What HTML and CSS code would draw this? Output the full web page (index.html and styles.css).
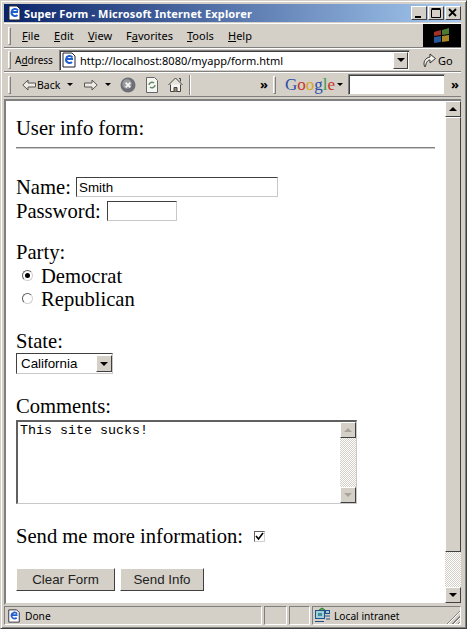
FILE: index.html
```html
<!DOCTYPE html>
<html lang="en">
<head>
  <meta charset="UTF-8">
  <meta name="viewport" content="width=device-width, initial-scale=1.0">
  <title>Super Form - Microsoft Internet Explorer</title>
  <link rel="stylesheet" href="styles.css">
</head>
<body>
  <div class="window">
    <div class="titlebar">
      <svg class="title-icon" width="16" height="16" viewBox="0 0 16 16">
        <path d="M3 1h8l3 3v11H3z" fill="#fff" stroke="#223"/>
        <path d="M12 7H5.500M5.500 7a3.600 3.600 0 0 1 6.500-1.500M5.500 7a3.600 3.600 0 0 0 6 3" fill="none" stroke="#1f5fd0" stroke-width="2"/>
      </svg>
      <span class="title-text">Super Form - Microsoft Internet Explorer</span>
      <div class="win-buttons">
        <button class="win-btn" type="button"><svg width="12" height="12"><rect x="2" y="9" width="6" height="2" fill="#000"/></svg></button>
        <button class="win-btn" type="button"><svg width="12" height="12"><path d="M1.500 2.500h9v8h-9zM1.500 1.500h9" fill="none" stroke="#000"/></svg></button>
        <button class="win-btn" type="button"><svg width="12" height="12"><path d="M2 2l7 7M9 2l-7 7" stroke="#000" stroke-width="1.800"/></svg></button>
      </div>
    </div>

    <div class="bar menu-bar">
      <span class="grip"></span>
      <nav class="menu">
        <span><u>F</u>ile</span>
        <span><u>E</u>dit</span>
        <span><u>V</u>iew</span>
        <span>F<u>a</u>vorites</span>
        <span><u>T</u>ools</span>
        <span><u>H</u>elp</span>
      </nav>
      <div class="throbber">
        <svg class="flag" width="18" height="16" viewBox="0 0 18 16">
          <path d="M1 4l7-2v5l-7 1z" fill="#c8402c"/>
          <path d="M9 2l7-2v6l-7 1z" fill="#5c9a3c"/>
          <path d="M1 9l7-1v6l-7 1z" fill="#2f6fc0"/>
          <path d="M9 8l7-1v6l-7 1z" fill="#d8a82c"/>
        </svg>
      </div>
    </div>

    <div class="bar address-bar">
      <span class="grip"></span>
      <span class="address-label">A<u>d</u>dress</span>
      <div class="address-field">
        <svg width="16" height="16" viewBox="0 0 16 16">
          <path d="M2 1h9l3 3v11H2z" fill="#fff" stroke="#223"/>
          <path d="M12 7H5M5 7a3.600 3.600 0 0 1 6.500-1.500M5 7a3.600 3.600 0 0 0 6 3" fill="none" stroke="#1f5fd0" stroke-width="2"/>
        </svg>
        <span class="url">http://localhost:8080/myapp/form.html</span>
        <span class="drop-btn"><i class="arrow-down"></i></span>
      </div>
      <div class="go">
        <svg width="15" height="16" viewBox="0 0 15 16">
          <path d="M2.500 14.500C1 10 3 6 8 5V2l5.500 4.500L8 11V8c-2.500 0-4 2.500-4.500 6.500z" fill="#f4f2ec" stroke="#333"/>
        </svg>
        <span>Go</span>
      </div>
    </div>

    <div class="bar tool-bar">
      <span class="grip"></span>
      <svg class="nav-arrow" width="14" height="12" viewBox="0 0 14 12">
        <path d="M.8 6L6 1v3h7.500v4H6v3z" fill="#eeeae2" stroke="#555"/>
      </svg>
      <span class="back-label">Back</span>
      <i class="arrow-small arrow-back"></i>
      <svg class="nav-arrow nav-forward" width="14" height="12" viewBox="0 0 14 12">
        <path d="M13.200 6L8 1v3H.5v4H8v3z" fill="#eeeae2" stroke="#555"/>
      </svg>
      <i class="arrow-small arrow-forward"></i>
      <svg class="stop" width="16" height="16" viewBox="0 0 17 17">
        <circle cx="8.500" cy="8.500" r="8" fill="#6d6f75"/>
        <circle cx="7.500" cy="7.500" r="5" fill="#9a9ca2"/>
        <path d="M6 6l5 5M11 6l-5 5" stroke="#f2f2f2" stroke-width="2"/>
      </svg>
      <svg class="refresh" width="14" height="16" viewBox="0 0 14 16">
        <path d="M1.500.5h8l3 3v12h-11z" fill="#f6f6f2" stroke="#666"/>
        <path d="M4 8a3 3 0 0 1 5-2M10 8a3 3 0 0 1-5 2" fill="none" stroke="#6a8a6a" stroke-width="1.500"/>
      </svg>
      <svg class="home" width="15" height="15" viewBox="0 0 15 15">
        <path d="M.5 8l7-7 7 7" fill="#e8e4da" stroke="#444"/>
        <path d="M2.500 7.500v7h10v-7" fill="#f6f4ee" stroke="#444"/>
        <path d="M6 14.500v-4h3v4" fill="#9a8a70" stroke="#444"/>
        <path d="M11 1.500h1.500v3" fill="none" stroke="#444"/>
      </svg>
      <span class="sep"></span>
      <span class="chevrons chevrons-mid">»</span>
      <span class="grip grip-google"></span>
      <span class="google"><b class="g-blue">G</b><b class="g-red">o</b><b class="g-yellow">o</b><b class="g-blue">g</b><b class="g-green">l</b><b class="g-red">e</b></span>
      <i class="arrow-small arrow-google"></i>
      <input class="search" type="text">
      <span class="chevrons chevrons-end">»</span>
    </div>

    <div class="viewport">
      <form class="page">
        <div class="form-title">User info form:</div>
        <hr class="rule">

        <div class="line line-name">Name: <input class="field field-name" type="text" value="Smith"></div>
        <div class="line">Password: <input class="field field-pass" type="password"></div>

        <div class="line gap-party">Party:</div>
        <div class="option"><span class="radio radio-on"></span>Democrat</div>
        <div class="option"><span class="radio"></span>Republican</div>

        <div class="line gap-state">State:</div>
        <div class="select">
          <span class="select-value">California</span>
          <span class="drop-btn"><i class="arrow-down"></i></span>
        </div>

        <div class="line gap-block">Comments:</div>
        <div class="textarea-box">
          <textarea class="comments" spellcheck="false">This site sucks!</textarea>
          <div class="scrollbar scrollbar-small">
            <span class="sb-btn"><i class="arrow-up arrow-grey"></i></span>
            <span class="sb-track"></span>
            <span class="sb-btn"><i class="arrow-down arrow-grey"></i></span>
          </div>
        </div>

        <div class="line gap-block">Send me more information: <span class="check"><svg width="9" height="9"><path d="M1 4l2.500 3L8 1" fill="none" stroke="#000" stroke-width="1.600"/></svg></span></div>

        <div class="actions">
          <button class="btn btn-clear" type="reset">Clear Form</button>
          <button class="btn btn-send" type="button">Send Info</button>
        </div>
      </form>
      <div class="scrollbar">
        <span class="sb-btn"><i class="arrow-up"></i></span>
        <span class="sb-thumb"></span>
        <span class="sb-track"></span>
        <span class="sb-btn"><i class="arrow-down"></i></span>
      </div>
    </div>

    <div class="statusbar">
      <div class="panel panel-main">
        <svg width="14" height="14" viewBox="0 0 16 16">
          <path d="M2 1h9l3 3v11H2z" fill="#fff" stroke="#223"/>
          <path d="M12 7H5M5 7a3.600 3.600 0 0 1 6.500-1.500M5 7a3.600 3.600 0 0 0 6 3" fill="none" stroke="#1f5fd0" stroke-width="2"/>
        </svg>
        <span>Done</span>
      </div>
      <div class="panel panel-a"></div>
      <div class="panel panel-b"></div>
      <div class="panel panel-zone">
        <svg width="17" height="17" viewBox="0 0 17 17">
          <path d="M5 3l3-2 3 2" fill="#5cb04c" stroke="#2f7a2f"/>
          <rect x="1.500" y="3.500" width="9" height="8" fill="#9fd0d8" stroke="#27508a"/>
          <rect x="11.500" y="3.500" width="4" height="3" fill="#9fd0d8" stroke="#27508a"/>
          <path d="M1 14.500h9M11 9h5M12 12h4" stroke="#27508a"/>
          <rect x="4" y="6" width="4" height="3" fill="#3f8f9f"/>
        </svg>
        <span>Local intranet</span>
        <span class="resize"></span>
      </div>
    </div>
  </div>
</body>
</html>
```

FILE: styles.css
```css
* {
  box-sizing: border-box;
}

html, body {
  margin: 0;
  padding: 0;
}

body {
  width: 467px;
  height: 629px;
  overflow: hidden;
  font-family: "Noto Sans", "Liberation Sans", sans-serif;
  font-size: 11px;
  color: #000;
}

.window {
  height: 629px;
  display: flex;
  flex-direction: column;
  padding: 4px 5px 3px 3px;
  background-color: #d4d0c8;
  border: 1px solid #404040;
  border-top-color: #d4d0c8;
  border-left-color: #d4d0c8;
  box-shadow: inset 1px 1px 0 #fff, inset -1px -1px 0 #808080;
}

/* title bar */
.titlebar {
  height: 18px;
  flex: none;
  display: flex;
  align-items: center;
  margin-top: -1px;
  padding-left: 2px;
  background: linear-gradient(to right, #0a246a, #a6caf0);
}

.title-icon {
  flex: none;
}

.title-text {
  margin-left: 2px;
  color: #fff;
  font-weight: bold;
  font-size: 11px;
  letter-spacing: 0.14px;
  white-space: nowrap;
}

.win-buttons {
  margin-left: auto;
  display: flex;
  gap: 1px;
}

.win-btn {
  width: 16px;
  height: 14px;
  padding: 0;
  display: flex;
  align-items: center;
  justify-content: center;
  background-color: #d4d0c8;
  border: 1px solid #404040;
  border-top-color: #fff;
  border-left-color: #fff;
}

/* toolbars */
.bar {
  flex: none;
  display: flex;
  align-items: center;
  padding-left: 4px;
  border-top: 1px solid #fff;
  border-bottom: 1px solid #808080;
}

.menu-bar {
  height: 25px;
  margin-top: 1px;
}

.address-bar {
  height: 24px;
}

.tool-bar {
  height: 25px;
}

.grip {
  width: 3px;
  height: 18px;
  flex: none;
  background-color: #d4d0c8;
  border: 1px solid #808080;
  border-top-color: #fff;
  border-left-color: #fff;
}

.menu {
  display: flex;
  margin-left: 11px;
}

.menu span:nth-child(1) { width: 32px; }
.menu span:nth-child(2) { width: 34px; }
.menu span:nth-child(3) { width: 38px; }
.menu span:nth-child(4) { width: 61px; }
.menu span:nth-child(5) { width: 41px; }

.throbber {
  width: 38px;
  height: 23px;
  margin-left: auto;
  display: flex;
  align-items: center;
  justify-content: center;
  background-color: #000;
}

.flag {
  filter: blur(0.6px);
  opacity: 0.8;
}

.address-label {
  width: 40px;
  margin-left: 4px;
  font-size: 10px;
}

.address-field {
  width: 351px;
  height: 21px;
  margin-left: 4px;
  display: flex;
  align-items: center;
  padding-left: 1px;
  background-color: #fff;
  border: 1px solid #808080;
  border-right-color: #d4d0c8;
  border-bottom-color: #d4d0c8;
  box-shadow: inset 1px 1px 0 #404040;
}

.url {
  margin-left: 3px;
}

.drop-btn {
  width: 15px;
  height: 17px;
  margin-left: auto;
  margin-right: 1px;
  display: flex;
  align-items: center;
  justify-content: center;
  background-color: #d4d0c8;
  border: 1px solid #404040;
  border-top-color: #fff;
  border-left-color: #fff;
}

.arrow-down {
  width: 0;
  height: 0;
  border: 4px solid transparent;
  border-bottom-width: 0;
  border-top-color: #000;
}

.arrow-up {
  width: 0;
  height: 0;
  border: 4px solid transparent;
  border-top-width: 0;
  border-bottom-color: #000;
}

.arrow-grey {
  border-top-color: #a8a49c;
  border-bottom-color: #a8a49c;
}

.go {
  display: flex;
  align-items: center;
  margin-left: 12px;
}

.go span {
  margin-left: 1px;
}

.nav-arrow {
  margin-left: 11px;
  flex: none;
}

.back-label {
  width: 23px;
  margin-left: 1px;
  font-size: 10.500px;
}

.arrow-small {
  width: 0;
  height: 0;
  flex: none;
  border: 3px solid transparent;
  border-bottom-width: 0;
  border-top-color: #000;
}

.arrow-back { margin-left: 7px; }
.nav-forward { margin-left: 11px; }
.arrow-forward { margin-left: 7px; }

.stop {
  margin-left: 9px;
  flex: none;
}

.refresh {
  margin-left: 9px;
  flex: none;
}

.home {
  margin-left: 9px;
  flex: none;
}

.sep {
  width: 2px;
  height: 20px;
  margin-left: 6px;
  border-left: 1px solid #808080;
  border-right: 1px solid #fff;
}

.chevrons {
  width: 8px;
  font-weight: bold;
  font-size: 13px;
  line-height: 1;
}

.chevrons-mid { margin-left: 69px; }

.grip-google { margin-left: 5px; }

.google {
  width: 49px;
  margin-left: 9px;
  font-family: "Liberation Serif", serif;
  font-size: 17px;
  line-height: 1;
}

.google b { font-weight: normal; }
.g-blue { color: #2a4fa8; }
.g-red { color: #c8322a; }
.g-yellow { color: #d4a520; }
.g-green { color: #3e9a48; }

.arrow-google { margin-left: 3px; }

.search {
  width: 97px;
  height: 21px;
  margin-left: 5px;
  padding: 0;
  background-color: #fff;
  border: 1px solid #808080;
  border-right-color: #d4d0c8;
  border-bottom-color: #d4d0c8;
  box-shadow: inset 1px 1px 0 #404040;
}

.chevrons-end { margin-left: 6px; }

/* page area */
.viewport {
  height: 506px;
  flex: none;
  display: flex;
  margin-top: 2px;
  background-color: #fff;
  border: 2px solid #808080;
  border-right-width: 0;
  border-bottom-color: #d4d0c8;
}

.page {
  flex: 1;
  padding: 15px 10px 0 10px;
  font-family: "Liberation Serif", serif;
  font-size: 20.600px;
  line-height: 24px;
}

.form-title {
  height: 24px;
}

.rule {
  height: 2px;
  margin: 7px 0 0 0;
  background-color: #808080;
  border: none;
  border-bottom: 1px solid #c8c8c8;
}

.line {
  display: flex;
  align-items: center;
  height: 24px;
  white-space: pre;
}

.line-name {
  margin-top: 26px;
}

.gap-party { margin-top: 17px; }
.gap-state { margin-top: 19px; }
.gap-block { margin-top: 20px; }

.field {
  height: 20px;
  padding: 0 2px;
  font-family: "Liberation Sans", sans-serif;
  font-size: 13.330px;
  background-color: #fff;
  border: 1px solid #c8c8c8;
  border-top-color: #404040;
  border-left-color: #404040;
  outline: none;
}

.field-name {
  width: 202px;
}

.field-pass {
  width: 70px;
  margin-left: 1px;
}

.option {
  height: 23px;
  display: flex;
  align-items: center;
  padding-left: 6px;
}

.radio {
  width: 11px;
  height: 11px;
  margin-right: 8px;
  display: flex;
  align-items: center;
  justify-content: center;
  background-color: #fff;
  border: 1px solid #606060;
  border-right-color: #d0d0d0;
  border-bottom-color: #d0d0d0;
  border-radius: 50%;
}

.radio-on::before {
  content: '';
  width: 5px;
  height: 5px;
  background-color: #000;
  border-radius: 50%;
}

.select {
  width: 97px;
  height: 21px;
  display: flex;
  align-items: center;
  padding-left: 4px;
  font-family: "Liberation Sans", sans-serif;
  font-size: 13.330px;
  background-color: #fff;
  border: 1px solid #c8c8c8;
  border-top-color: #404040;
  border-left-color: #404040;
}

.select .drop-btn {
  width: 16px;
  margin-right: 0;
}

.textarea-box {
  width: 341px;
  height: 84px;
  margin-top: 2px;
  display: flex;
  background-color: #fff;
  border: 2px solid #606060;
  border-right-color: #c8c8c8;
  border-bottom-color: #c8c8c8;
  border-right-width: 1px;
  border-bottom-width: 1px;
}

.comments {
  flex: 1;
  min-width: 0;
  padding: 1px 2px;
  resize: none;
  overflow: hidden;
  border: none;
  outline: none;
  font-family: "Liberation Mono", monospace;
  font-size: 13.330px;
  line-height: 15px;
}

.scrollbar {
  width: 16px;
  flex: none;
  display: flex;
  flex-direction: column;
}

.sb-btn {
  height: 16px;
  flex: none;
  display: flex;
  align-items: center;
  justify-content: center;
  background-color: #d4d0c8;
  border: 1px solid #404040;
  border-top-color: #fff;
  border-left-color: #fff;
}

.sb-thumb {
  height: 435px;
  flex: none;
  background-color: #d4d0c8;
  border: 1px solid #404040;
  border-top-color: #fff;
  border-left-color: #fff;
}

.sb-track {
  flex: 1;
  background: repeating-conic-gradient(#d4d0c8 0 25%, #fff 0 50%) 0 0 / 2px 2px;
}

.check {
  width: 11px;
  height: 11px;
  margin-left: 6px;
  display: flex;
  align-items: center;
  justify-content: center;
  background-color: #fff;
  border: 1px solid #606060;
  border-right-color: #d0d0d0;
  border-bottom-color: #d0d0d0;
}

.actions {
  display: flex;
  gap: 5px;
  margin-top: 20px;
}

.btn {
  height: 23px;
  padding: 0;
  font-family: "Liberation Sans", sans-serif;
  font-size: 13.330px;
  color: #222;
  background-color: #d4d0c8;
  border: 1px solid #404040;
  border-top-color: #fff;
  border-left-color: #fff;
}

.btn-clear { width: 99px; }
.btn-send { width: 84px; }

/* status bar */
.statusbar {
  height: 19px;
  flex: none;
  display: flex;
  margin-top: 1px;
}

.panel {
  display: flex;
  align-items: center;
  margin-right: 2px;
  font-size: 10.200px;
  border: 1px solid #d4d0c8;
  border-top-color: #808080;
  border-left-color: #808080;
  border-right-color: #fff;
  border-bottom-color: #fff;
}

.panel-main {
  width: 258px;
  padding-left: 2px;
}

.panel-main span {
  margin-left: 4px;
}

.panel-a { width: 23px; }
.panel-b { width: 21px; }

.panel-zone {
  flex: 1;
  margin-right: 0;
  position: relative;
  padding-left: 1px;
}

.panel-zone span {
  margin-left: 3px;
}

.resize {
  position: absolute;
  right: 0;
  bottom: 0;
  width: 14px;
  height: 14px;
  background: repeating-linear-gradient(135deg, transparent 0 2px, #808080 2px 3px, #fff 3px 4px);
  clip-path: polygon(100% 0, 100% 100%, 0 100%);
}
```
